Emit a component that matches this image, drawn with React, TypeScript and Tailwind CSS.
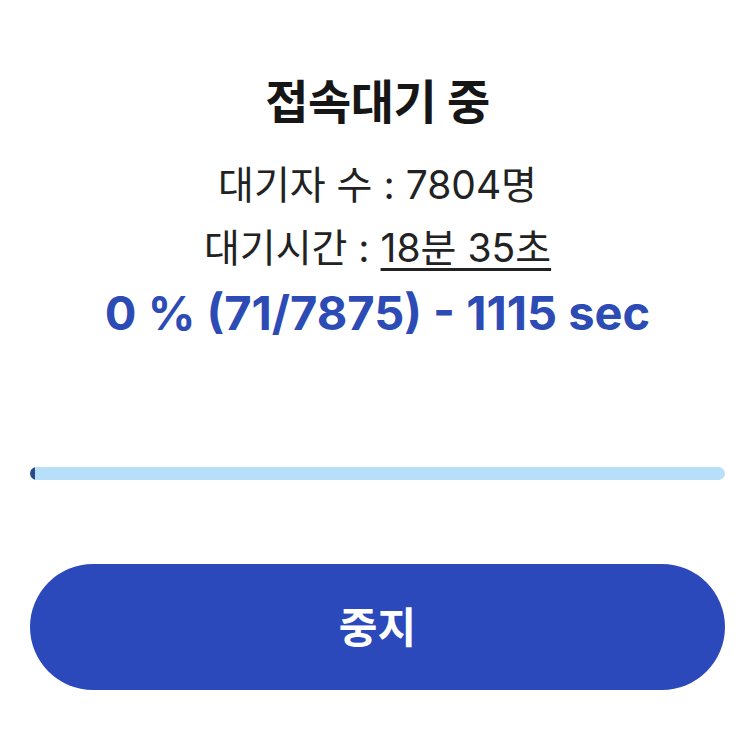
import React from "react";

export default function App() {
  return (
    <div
      className="w-[748px] h-[742px] bg-white flex flex-col items-center pl-[30px] pr-[23px]"
      style={{ fontFamily: '"Inter", "Noto Sans CJK KR", sans-serif' }}
    >
      <h1 className="mt-[72px] text-[47px] leading-[60px] font-bold text-[#161616] tracking-[-0.5px]">
        접속대기 중
      </h1>
      <p className="mt-[27px] text-[39px] leading-[52px] text-[#222222]">
        대기자 수 : 7804명
      </p>
      <p className="mt-[11px] text-[39px] leading-[52px] text-[#222222]">
        대기시간 : <span className="underline underline-offset-[6px] decoration-[3px]">18분 35초</span>
      </p>
      <p className="mt-[11px] text-[47px] leading-[56px] font-bold text-[#2d4bb5]">
        0 % (71/7875) - 1115 sec
      </p>
      <div className="mt-[126px] w-full h-[13px] rounded-full bg-[#b8dff9] overflow-hidden">
        <div className="h-full bg-[#2b4a8c] rounded-l-full" style={{ width: "5px" }} />
      </div>
      <button className="mt-[84px] w-full h-[126px] rounded-full bg-[#2c49bc] text-white text-[42px] font-bold">
        중지
      </button>
    </div>
  );
}
